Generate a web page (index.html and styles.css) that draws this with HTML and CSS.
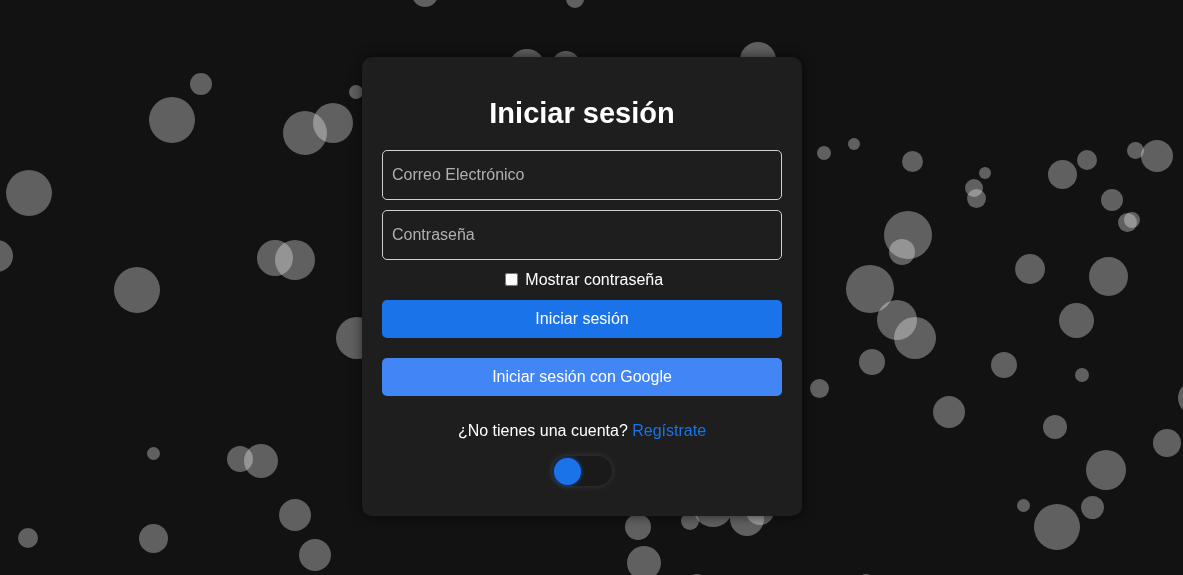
FILE: index.html
```html
<!DOCTYPE html>
<html lang="es">
<head>
<meta charset="utf-8">
<title>Iniciar sesión</title>
<link rel="stylesheet" href="styles.css">
</head>
<body>
<div class="bubbles" aria-hidden="true">
  <span class="bubble" style="left:412px;top:-19px;width:26px;height:26px"></span>
  <span class="bubble" style="left:566px;top:-10px;width:18px;height:18px"></span>
  <span class="bubble" style="left:509px;top:49px;width:36px;height:36px"></span>
  <span class="bubble" style="left:552px;top:51px;width:28px;height:28px"></span>
  <span class="bubble" style="left:740px;top:42px;width:36px;height:36px"></span>
  <span class="bubble" style="left:190px;top:73px;width:22px;height:22px"></span>
  <span class="bubble" style="left:149px;top:97px;width:46px;height:46px"></span>
  <span class="bubble" style="left:283px;top:111px;width:44px;height:44px"></span>
  <span class="bubble" style="left:313px;top:103px;width:40px;height:40px"></span>
  <span class="bubble" style="left:349px;top:85px;width:14px;height:14px"></span>
  <span class="bubble" style="left:6px;top:170px;width:46px;height:46px"></span>
  <span class="bubble" style="left:-19px;top:240px;width:32px;height:32px"></span>
  <span class="bubble" style="left:257px;top:240px;width:36px;height:36px"></span>
  <span class="bubble" style="left:275px;top:240px;width:40px;height:40px"></span>
  <span class="bubble" style="left:114px;top:267px;width:46px;height:46px"></span>
  <span class="bubble" style="left:336px;top:317px;width:42px;height:42px"></span>
  <span class="bubble" style="left:146.5px;top:446.5px;width:13px;height:13px"></span>
  <span class="bubble" style="left:227px;top:446px;width:26px;height:26px"></span>
  <span class="bubble" style="left:244px;top:444px;width:34px;height:34px"></span>
  <span class="bubble" style="left:279px;top:499px;width:32px;height:32px"></span>
  <span class="bubble" style="left:299px;top:539px;width:32px;height:32px"></span>
  <span class="bubble" style="left:18px;top:528px;width:20px;height:20px"></span>
  <span class="bubble" style="left:138.5px;top:523.5px;width:29px;height:29px"></span>
  <span class="bubble" style="left:817px;top:146px;width:14px;height:14px"></span>
  <span class="bubble" style="left:848px;top:138px;width:12px;height:12px"></span>
  <span class="bubble" style="left:901.5px;top:150.5px;width:21px;height:21px"></span>
  <span class="bubble" style="left:979px;top:167px;width:12px;height:12px"></span>
  <span class="bubble" style="left:965px;top:179px;width:18px;height:18px"></span>
  <span class="bubble" style="left:966.5px;top:188.5px;width:19px;height:19px"></span>
  <span class="bubble" style="left:884px;top:211px;width:48px;height:48px"></span>
  <span class="bubble" style="left:889px;top:239px;width:26px;height:26px"></span>
  <span class="bubble" style="left:846px;top:265px;width:48px;height:48px"></span>
  <span class="bubble" style="left:877px;top:300px;width:40px;height:40px"></span>
  <span class="bubble" style="left:894px;top:317px;width:42px;height:42px"></span>
  <span class="bubble" style="left:859px;top:349px;width:26px;height:26px"></span>
  <span class="bubble" style="left:809.5px;top:378.5px;width:19px;height:19px"></span>
  <span class="bubble" style="left:933px;top:396px;width:32px;height:32px"></span>
  <span class="bubble" style="left:991px;top:352px;width:26px;height:26px"></span>
  <span class="bubble" style="left:1015px;top:254px;width:30px;height:30px"></span>
  <span class="bubble" style="left:1047.5px;top:159.5px;width:29px;height:29px"></span>
  <span class="bubble" style="left:1077px;top:150px;width:20px;height:20px"></span>
  <span class="bubble" style="left:1126.5px;top:141.5px;width:17px;height:17px"></span>
  <span class="bubble" style="left:1141px;top:140px;width:32px;height:32px"></span>
  <span class="bubble" style="left:1101px;top:189px;width:22px;height:22px"></span>
  <span class="bubble" style="left:1117.5px;top:212.5px;width:19px;height:19px"></span>
  <span class="bubble" style="left:1124px;top:212px;width:16px;height:16px"></span>
  <span class="bubble" style="left:1088.5px;top:256.5px;width:39px;height:39px"></span>
  <span class="bubble" style="left:1058.5px;top:302.5px;width:35px;height:35px"></span>
  <span class="bubble" style="left:1075px;top:368px;width:14px;height:14px"></span>
  <span class="bubble" style="left:1178px;top:381px;width:34px;height:34px"></span>
  <span class="bubble" style="left:1043px;top:415px;width:24px;height:24px"></span>
  <span class="bubble" style="left:1153px;top:429px;width:28px;height:28px"></span>
  <span class="bubble" style="left:1086px;top:450px;width:40px;height:40px"></span>
  <span class="bubble" style="left:1016.5px;top:498.5px;width:13px;height:13px"></span>
  <span class="bubble" style="left:1034px;top:504px;width:46px;height:46px"></span>
  <span class="bubble" style="left:1080.5px;top:495.5px;width:23px;height:23px"></span>
  <span class="bubble" style="left:625px;top:514px;width:26px;height:26px"></span>
  <span class="bubble" style="left:627px;top:546px;width:34px;height:34px"></span>
  <span class="bubble" style="left:681px;top:512px;width:18px;height:18px"></span>
  <span class="bubble" style="left:693px;top:487px;width:40px;height:40px"></span>
  <span class="bubble" style="left:730px;top:502px;width:34px;height:34px"></span>
  <span class="bubble" style="left:746px;top:497px;width:28px;height:28px"></span>
  <span class="bubble" style="left:687px;top:574px;width:20px;height:20px"></span>
  <span class="bubble" style="left:856px;top:574px;width:20px;height:20px"></span>
</div>

<main class="stage">
  <div class="card">
    <h2 class="title">Iniciar sesión</h2>
    <input class="field" type="email" placeholder="Correo Electrónico">
    <input class="field" type="password" placeholder="Contraseña">
    <div class="show-row">
      <input class="check" type="checkbox" id="show"> <label for="show">Mostrar contraseña</label>
    </div>
    <button class="btn btn-primary" type="button">Iniciar sesión</button>
    <button class="btn btn-google" type="button">Iniciar sesión con Google</button>
    <p class="signup">¿No tienes una cuenta? <a class="link" href="#">Regístrate</a></p>
    <div class="toggle"><span class="knob"></span></div>
  </div>
</main>
</body>
</html>
```

FILE: styles.css
```css
html, body {
  margin: 0;
  height: 100%;
}

body {
  background: #121212;
  font-family: "Liberation Sans", Arial, sans-serif;
  color: #ffffff;
  overflow: hidden;
}

.bubbles {
  position: fixed;
  inset: 0;
  z-index: 0;
  overflow: hidden;
}

.bubble {
  position: absolute;
  border-radius: 50%;
  background: rgba(255, 255, 255, 0.33);
}

.stage {
  position: relative;
  z-index: 1;
  height: 100vh;
  box-sizing: border-box;
  padding-right: 19px;
  padding-bottom: 2px;
  display: flex;
  align-items: center;
  justify-content: center;
}

.card {
  width: 440px;
  box-sizing: border-box;
  padding: 20px;
  background: #1e1e1e;
  border-radius: 10px;
  box-shadow: 0 0 12px rgba(0, 0, 0, 0.6);
  display: flex;
  flex-direction: column;
}

.title {
  margin: 20px 0 21px;
  font-size: 29px;
  font-weight: bold;
  text-align: center;
  line-height: 32px;
}

.field {
  display: block;
  width: 100%;
  height: 50px;
  box-sizing: border-box;
  margin: 0 0 10px;
  padding: 0 9px;
  background: #1e1e1e;
  border: 1px solid #cfcfcf;
  border-radius: 5px;
  color: #ffffff;
  font-family: "Liberation Sans", Arial, sans-serif;
  font-size: 16px;
  outline: none;
}

.field::placeholder {
  color: #b0b0b0;
}

.show-row {
  height: 20px;
  line-height: 20px;
  text-align: center;
  font-size: 16px;
}

.check {
  margin: 3px 3px 3px 4px;
  width: 13px;
  height: 13px;
  vertical-align: -1px;
}

.btn {
  display: block;
  width: 100%;
  height: 38px;
  border: none;
  border-radius: 5px;
  color: #ffffff;
  font-family: "Liberation Sans", Arial, sans-serif;
  font-size: 16px;
  padding: 0;
  cursor: pointer;
}

.btn-primary {
  margin-top: 10px;
  background: #1a73e8;
}

.btn-google {
  margin-top: 20px;
  background: #4285f4;
}

.signup {
  margin: 26px 0 16px;
  text-align: center;
  font-size: 16px;
  line-height: 18px;
}

.link {
  color: #1a73e8;
  text-decoration: none;
}

.toggle {
  align-self: center;
  width: 60px;
  height: 30px;
  box-sizing: border-box;
  padding: 2px;
  margin-bottom: 10px;
  border-radius: 15px;
  background: #1a1a1a;
  box-shadow: 0 0 7px rgba(255, 255, 255, 0.12);
  display: flex;
  align-items: center;
}

.knob {
  width: 27px;
  height: 27px;
  border-radius: 50%;
  background: #1a73e8;
  box-shadow: 0 0 4px rgba(26, 115, 232, 0.7);
}
```
